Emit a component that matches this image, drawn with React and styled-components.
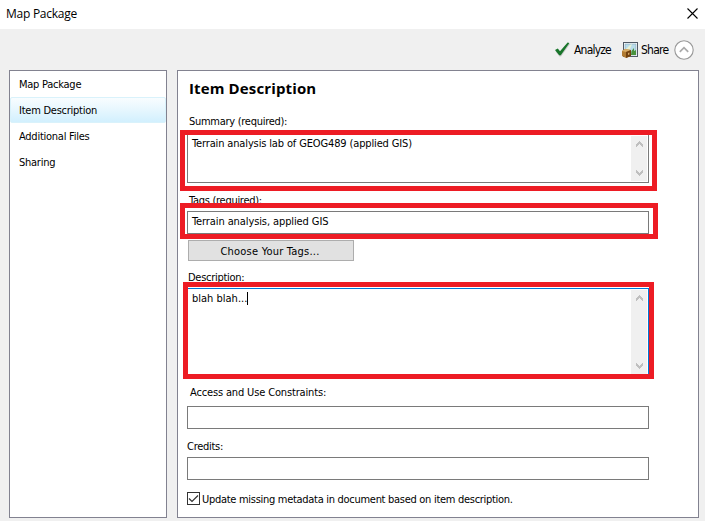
import React from "react";
import styled, { createGlobalStyle } from "styled-components";

const GlobalStyle = createGlobalStyle`
  * { box-sizing: border-box; }
  body {
    margin: 0;
    background: #f0f0f0;
    color: #000;
    font: 11px/14px "DejaVu Sans Condensed", "DejaVu Sans", sans-serif;
    white-space: nowrap;
    overflow: hidden;
  }
`;

const Window = styled.div`
  display: flex;
  flex-direction: column;
  width: 705px;
  height: 521px;
  background: #f0f0f0;
`;

const TitleBar = styled.header`
  display: flex;
  align-items: center;
  justify-content: space-between;
  height: 29px;
  padding: 0 7px 2px 6px;
  background: #fff;
  font: 12px/16px "Open Sans", sans-serif;
  letter-spacing: -0.26px;
`;

const Toolbar = styled.div`
  display: flex;
  align-items: center;
  justify-content: flex-end;
  height: 41px;
  padding: 0 11px 0 0;
`;

const ToolAction = styled.div`
  display: flex;
  align-items: center;
  gap: ${(p) => p.$gap}px;
  width: ${(p) => p.$width}px;
  font-size: 12px;
  letter-spacing: ${(p) => p.$track}px;
`;

const Panels = styled.main`
  display: flex;
  gap: 10px;
  height: 448px;
  padding-left: 9px;
`;

const Sidebar = styled.nav`
  width: 158px;
  border: 1px solid #828290;
  background: #fff;
`;

const SidebarItem = styled.div`
  display: flex;
  align-items: center;
  height: 26px;
  padding: 2px 0 0 8px;
  border-radius: 2px;
  letter-spacing: -0.25px;
  border: 1px solid ${(p) => (p.$active ? "#d9f2fb" : "transparent")};
  background: ${(p) => (p.$active ? "linear-gradient(#f8fdff, #e8f7fe 45%, #d2f0fe)" : "none")};
`;

const FormPanel = styled.section`
  display: flex;
  flex-direction: column;
  width: 522px;
  padding-left: 9px;
  border: 1px solid #828290;
  background: #fff;
`;

const Heading = styled.h1`
  margin: 0;
  height: 35px;
  padding-left: 2px;
  font: bold 15px/35px "Open Sans", sans-serif;
  letter-spacing: 0.13px;
`;

const Label = styled.label`
  display: flex;
  align-items: flex-end;
  height: ${(p) => p.$height}px;
  padding: 0 0 ${(p) => p.$below}px ${(p) => p.$indent}px;
  letter-spacing: ${(p) => p.$track ?? -0.28}px;
`;

const Field = styled.div`
  position: relative;
  display: flex;
  justify-content: space-between;
  width: 462px;
  height: ${(p) => p.$height}px;
  padding: ${(p) => (p.$single ? "3px 1px 0 4px" : "1px 1px 1px 4px")};
  border: 1px solid ${(p) => (p.$focused ? "#0078d7" : "#7a7a7a")};
  letter-spacing: ${(p) => p.$track ?? -0.14}px;
`;

const FieldText = styled.div`
  display: flex;
  height: 14px;
  margin-top: ${(p) => p.$drop ?? 1}px;
  line-height: 14px;
`;

const Caret = styled.span`
  width: 1px;
  height: 13px;
  background: #000;
`;

const ScrollTrack = styled.div`
  display: flex;
  flex-direction: column;
  align-items: center;
  justify-content: space-between;
  width: 16px;
  padding: 5px 0;
  background: #f0f0f0;
`;

const Highlight = styled.div`
  position: absolute;
  top: ${(p) => p.$top}px;
  left: ${(p) => p.$left}px;
  width: ${(p) => p.$width}px;
  height: ${(p) => p.$height}px;
  border: 5px solid #ed1c24;
`;

const TagsButton = styled.button`
  width: 166px;
  height: 21px;
  margin: 6px 0 0 1px;
  padding: 2px 2px 0 0;
  border: 1px solid #adadad;
  background: #e1e1e1;
  color: #000;
  font: inherit;
  letter-spacing: 0.22px;
`;

const CheckRow = styled.div`
  display: flex;
  align-items: center;
  gap: 2px;
  height: 13px;
  margin-top: 12px;
  letter-spacing: -0.29px;
`;

const CheckText = styled.span`
  padding-top: 2px;
`;

const CheckBox = styled.span`
  display: flex;
  width: 13px;
  height: 13px;
  border: 1px solid #333;
`;

function Arrow({ down }) {
  return (
    <svg width="7" height="6" viewBox="0 0 7 6" shapeRendering="crispEdges">
      <path
        d={down ? "M0 0h1v1h1v1h1v1h1v-1h1v-1h1v-1h1v3h-1v1h-1v1h-1v1h-1v-1h-1v-1h-1v-1h-1z" : "M0 6v-3h1v-1h1v-1h1v-1h1v1h1v1h1v1h1v3h-1v-1h-1v-1h-1v-1h-1v1h-1v1h-1v1z"}
        fill="#bfbfbf"
      />
    </svg>
  );
}

const Scroll = () => (
  <ScrollTrack>
    <Arrow />
    <Arrow down />
  </ScrollTrack>
);

const CloseIcon = () => (
  <svg width="11" height="11" viewBox="0 0 11 11">
    <path d="M.5.5l10 10M10.5.5l-10 10" stroke="#000" strokeWidth="1.1" />
  </svg>
);

const CheckIcon = () => (
  <svg width="15" height="15" viewBox="0 0 15 15">
    <path d="M.5 9.5L3 8.5 5.8 11.5 13.5 1.5 15 2 6 14.5H4.5z" fill="#c9c9c9" />
    <path d="M0 8L2.8 6.4 5 9.2 12.6 .6 14.4 1 5.8 13.3H4.2z" fill="#18752a" />
  </svg>
);

const ShareIcon = () => (
  <svg width="16" height="16" viewBox="0 0 16 16">
    <rect x="1.5" y=".5" width="14" height="14" fill="#fff" stroke="#505a66" />
    <rect x="3" y="2" width="11" height="11" fill="#b9dcea" stroke="#83a6b8" strokeWidth=".6" />
    <path d="M3 8L8 3 10 2 8 7 3 11z" fill="#e6f2d7" />
    <path d="M9 13L9.5 9 12 6 12 9 14 8V13z" fill="#49923d" />
    <path d="M0 9l3-2 6 1v6l-5 2-4-2z" fill="#b17b32" />
    <path d="M0 9l3-2 6 1-5 2z" fill="#d9ac65" />
    <path d="M4 10l5-2v6l-5 2z" fill="#73420f" />
    <path d="M6 11l1.4-.6v2L6 13z" fill="#d4a869" />
  </svg>
);

const CollapseIcon = () => (
  <svg width="20" height="20" viewBox="0 0 20 20">
    <circle cx="10" cy="10" r="9.2" fill="#fff" stroke="#999" strokeWidth="1.1" />
    <path d="M5.8 11.8L10 7.6l4.2 4.2" fill="none" stroke="#aaa" strokeWidth="1.7" />
  </svg>
);

const sections = ["Map Package", "Item Description", "Additional Files", "Sharing"];

export default function App() {
  return (
    <Window>
      <GlobalStyle />
      <TitleBar>
        Map Package
        <CloseIcon />
      </TitleBar>
      <Toolbar>
        <ToolAction $gap={4} $width={67} $track={-0.8}>
          <CheckIcon />
          Analyze
        </ToolAction>
        <ToolAction $gap={3} $width={52} $track={-0.75}>
          <ShareIcon />
          Share
        </ToolAction>
        <CollapseIcon />
      </Toolbar>
      <Panels>
        <Sidebar>
          {sections.map((name) => (
            <SidebarItem key={name} $active={name === "Item Description"}>
              {name}
            </SidebarItem>
          ))}
        </Sidebar>
        <FormPanel>
          <Heading>Item Description</Heading>
          <Label $height={28} $below={5} $indent={2}>Summary (required):</Label>
          <Field $height={49}>
            <FieldText>Terrain analysis lab of GEOG489 (applied GIS)</FieldText>
            <Scroll />
            <Highlight $top={-5} $left={-8} $width={477} $height={61} />
          </Field>
          <Label $height={28} $below={3} $indent={2}>Tags (required):</Label>
          <Field $height={23} $single $track={-0.1}>
            <FieldText $drop={0}>Terrain analysis, applied GIS</FieldText>
            <Highlight $top={-9} $left={-8} $width={478} $height={36} />
          </Field>
          <TagsButton>Choose Your Tags...</TagsButton>
          <Label $height={27} $below={3} $indent={1}>Description:</Label>
          <Field $height={88} $focused $track={0}>
            <FieldText $drop={2}>
              blah blah...
              <Caret />
            </FieldText>
            <Scroll />
            <Highlight $top={-7} $left={-5} $width={471} $height={97} />
          </Field>
          <Label $height={30} $below={6} $indent={3} $track={-0.15}>Access and Use Constraints:</Label>
          <Field $height={23} $single />
          <Label $height={28} $below={3} $indent={0}>Credits:</Label>
          <Field $height={23} $single />
          <CheckRow>
            <CheckBox>
              <svg width="11" height="11" viewBox="0 0 11 11">
                <path d="M1 5.5L4 8.5 10 2.5" fill="none" stroke="#333" strokeWidth="1.2" />
              </svg>
            </CheckBox>
            <CheckText>Update missing metadata in document based on item description.</CheckText>
          </CheckRow>
        </FormPanel>
      </Panels>
    </Window>
  );
}
